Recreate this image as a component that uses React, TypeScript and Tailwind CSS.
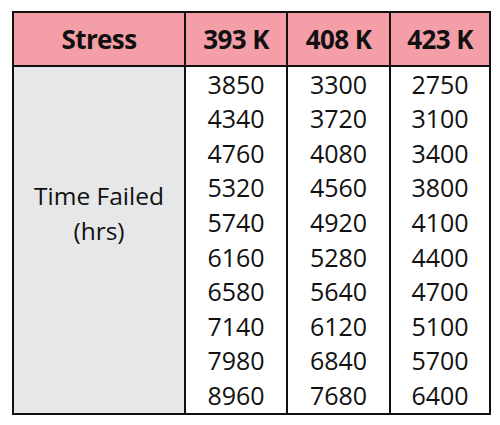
const headers = ['Stress', '393 K', '408 K', '423 K'];

const columns = [
  [3850, 4340, 4760, 5320, 5740, 6160, 6580, 7140, 7980, 8960],
  [3300, 3720, 4080, 4560, 4920, 5280, 5640, 6120, 6840, 7680],
  [2750, 3100, 3400, 3800, 4100, 4400, 4700, 5100, 5700, 6400],
];

export default function App() {
  return (
    <div className="w-[500px] h-[425px] bg-white pt-[11px] pl-[12px] text-[#111] font-['Open_Sans',sans-serif]">
      <div className="w-[479px] h-[404px] border-2 border-[#111]">
        {/* Header row */}
        <div className="grid grid-cols-[172px_102px_103px_98px] h-[54px] border-b-2 border-[#111] bg-[#f49fa8]">
          {headers.map((h, i) => (
            <div
              key={h}
              className={`flex items-center justify-center text-[26px] font-bold tracking-[-0.6px] ${
                i < headers.length - 1 ? 'border-r-2 border-[#111]' : ''
              }`}
            >
              {h}
            </div>
          ))}
        </div>

        {/* Body */}
        <div className="grid grid-cols-[172px_102px_103px_98px] h-[346px]">
          <div className="flex flex-col items-center justify-center pb-[54px] bg-[#e6e7e8] border-r-2 border-[#111] text-[24.5px] font-medium leading-[35px]">
            <span>Time Failed</span>
            <span>(hrs)</span>
          </div>
          {columns.map((col, i) => (
            <div
              key={i}
              className={`flex flex-col ${i < columns.length - 1 ? 'border-r-2 border-[#111]' : ''}`}
            >
              {col.map((v) => (
                <div key={v} className="h-[34.6px] flex items-center justify-center text-[25px] font-medium">
                  {v}
                </div>
              ))}
            </div>
          ))}
        </div>
      </div>
    </div>
  );
}
